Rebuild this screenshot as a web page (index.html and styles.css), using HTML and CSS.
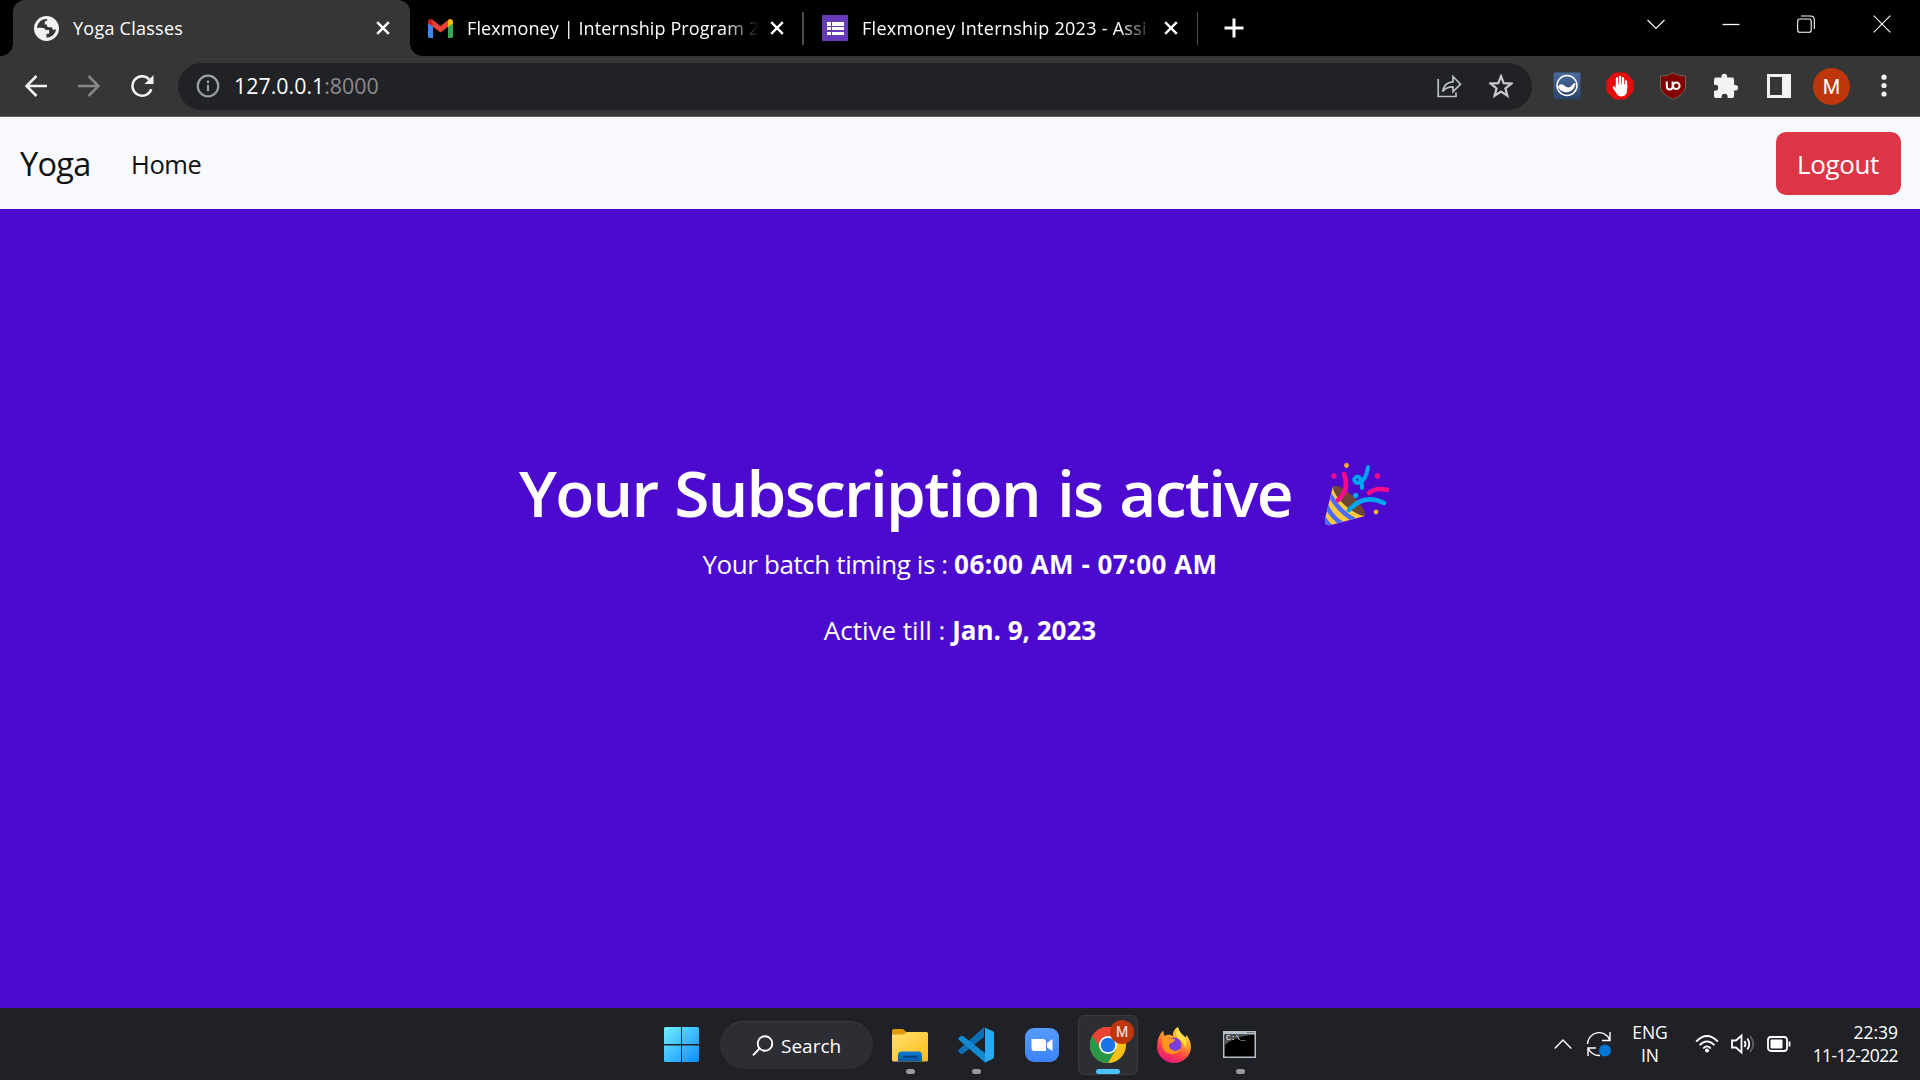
FILE: index.html
```html
<!DOCTYPE html>
<html lang="en">
<head>
<meta charset="utf-8">
<title>Yoga Classes</title>
<link rel="stylesheet" href="styles.css">
</head>
<body>
<header class="tabstrip">
  <div class="tab tab-active">
    <svg class="favicon" viewBox="0 0 24 24"><circle cx="12" cy="12" r="12" fill="#f1f3f4"/><path d="M12.600 2.800A9.400 9.400 0 0 0 2.700 11.300H7.500Q10.500 11.300 11.300 13.500H14.500V17H12V20.800A9.300 9.300 0 0 0 21.300 12.500Q20.500 13.500 18.800 13.200Q17 12.800 17.200 10.800H14Q12.500 10.800 12.500 9V8.200H10.300V6Q10.300 4.500 12.600 4.200Z" fill="#363636"/></svg>
    <span class="tab-title t1">Yoga Classes</span>
    <svg class="close" viewBox="0 0 14 14"><path d="M1.200 1.200L12.800 12.800M12.800 1.200L1.200 12.800"/></svg>
  </div>
  <div class="tab">
    <svg class="favicon gmail" viewBox="0 0 25 19"><path d="M0 3h5v16H1.700Q0 19 0 17.300Z" fill="#4285f4"/><path d="M20 3h5v14.300Q25 19 23.300 19H20Z" fill="#34a853"/><path d="M0 3Q0 0 2.500 0Q4 0 5 1l.8 6.500L0 4.500Z" fill="#c5221f"/><path d="M4.500 .8L12.500 7L20.500 .8V7.500L12.500 13.500L4.500 7.500Z" fill="#ea4335"/><path d="M20 1.200Q22-.5 23.800.4Q25 1.200 25 3V4.500L20 8Z" fill="#fbbc04"/></svg>
    <span class="tab-title t2">Flexmoney | Internship Program 2</span>
    <svg class="close" viewBox="0 0 14 14"><path d="M1.200 1.200L12.800 12.800M12.800 1.200L1.200 12.800"/></svg>
  </div>
  <div class="tab">
    <svg class="favicon forms" viewBox="0 0 26 26"><rect width="26" height="26" rx="1" fill="#673ab7"/><path d="M5 7h4v4H5zM5 12h4v3H5zM5 17h4v3H5zM10 7h12v4H10zM10 12h12v3H10zM10 17h12v3H10z" fill="#fff"/></svg>
    <span class="tab-title t3">Flexmoney Internship 2023 - Assi</span>
    <svg class="close" viewBox="0 0 14 14"><path d="M1.200 1.200L12.800 12.800M12.800 1.200L1.200 12.800"/></svg>
  </div>
  <svg class="newtab" viewBox="0 0 20 20"><path d="M10 .5v19M.5 10h19" stroke="#fff" stroke-width="3"/></svg>
  <div class="window-controls">
    <svg viewBox="0 0 18 18"><path d="M.5 5L9 13.500L17.500 5"/></svg>
    <svg viewBox="0 0 18 18"><path d="M.5 9.500h17" stroke-width="1.300"/></svg>
    <svg viewBox="0 0 18 18"><rect x=".7" y="4" width="13.500" height="13.300" rx="2"/><path d="M4 1h9.500q3.800 0 3.800 3.800V14"/></svg>
    <svg viewBox="0 0 18 18"><path d="M.7.700l16.600 16.600M17.300.700L.7 17.300"/></svg>
  </div>
</header>
<div class="toolbar">
  <svg class="tool back" viewBox="0 0 24 24"><path d="M23 12H3M12.500 2L2.500 12l10 10"/></svg>
  <svg class="tool forward" viewBox="0 0 24 24"><path d="M1 12h20M11.500 2l10 10-10 10"/></svg>
  <svg class="tool reload" viewBox="0 0 24 24"><path d="M19.200 5.300A9.700 9.700 0 1 0 21.300 15.300"/><path d="M23.500 1v9h-9z" fill="#f1f3f4" stroke="none"/></svg>
  <div class="omnibox">
    <svg class="info" viewBox="0 0 24 24"><circle cx="12" cy="12" r="10.300"/><path d="M12 10.800v6.400M12 6.500v2.400"/></svg>
    <span class="url">127.0.0.1<span class="port">:8000</span></span>
    <svg class="share" viewBox="0 0 25 24"><path d="M1.200 5v17.500H19v-4M5.500 17.500C7 11 11 7.800 16 7.800V2.500l7.500 7.700-7.500 7.600v-5C11.500 12.800 8.200 14 5.500 17.500Z"/></svg>
    <svg class="star" viewBox="0 0 24 24"><path d="M12 2.200l2.700 7 7.600.400-5.900 4.700 2 7.400L12 17.500l-6.400 4.200 2-7.400L1.700 9.600l7.600-.4z"/></svg>
  </div>
  <svg class="ext" viewBox="0 0 28 28"><defs><linearGradient id="eb" x2="0" y2="1"><stop stop-color="#4a6ca0"/><stop offset="1" stop-color="#2a4268"/></linearGradient></defs><rect x=".5" y=".5" width="27" height="27" rx="1.500" fill="url(#eb)"/><circle cx="14" cy="13.500" r="10" fill="none" stroke="#fff" stroke-width="1.500"/><path d="M5 15C6 11.500 9 11.500 12 14C15 16.500 17.500 15.500 19 13Q20.500 11 22.500 11A9.200 9.200 0 0 1 5 15Z" fill="#fff"/></svg>
  <svg class="ext" viewBox="0 0 28 28"><path d="M8.500.5h11l8 8v11l-8 8h-11l-8-8v-11z" fill="#e60c0c"/><path d="M11 15V6.500M14 14V4.800M17 14.500V6.200M20 16.500V9.500" stroke="#fff" stroke-width="2.300" stroke-linecap="round"/><path d="M9.700 12.500h11.500v5.500q-.5 6.500-5.800 6.500q-3.500 0-5.500-4L6.700 16q-.3-2 1.300-1.800l1.700 1.800z" fill="#fff"/></svg>
  <svg class="ext" viewBox="0 0 28 28"><path d="M14 .7Q19 4 26.500 4v11q-1 7.500-12.500 12.300Q2.500 22.500 1.500 15V4Q9 4 14 .7Z" fill="#800000" stroke="#776" stroke-width=".8"/><path d="M7.800 9.500v5q0 3 3.200 3q2.600 0 2.600-3v-5" fill="none" stroke="#fff" stroke-width="2"/><circle cx="17.300" cy="13.700" r="3.300" fill="none" stroke="#fff" stroke-width="2"/></svg>
  <svg class="ext" viewBox="0 0 28 28"><path d="M4 5.500H9.500V4.500a2.800 2.800 0 0 1 5.600 0v1h5q2 0 2 2V13h1.200a2.800 2.800 0 0 1 0 5.600h-1.200V24q0 2-2 2H15.600v-1.200a3 3 0 0 0-6 0V26H4q-2 0-2-2v-5.200h1.200a3 3 0 0 0 0-6H2V7.500q0-2 2-2z" fill="#f1f3f4"/></svg>
  <svg class="ext panel" viewBox="0 0 28 28"><path d="M2 2h24v24H2zM5 5v18h12V5z" fill="#f1f3f4" fill-rule="evenodd"/></svg>
  <span class="avatar">M</span>
  <svg class="ext menu" viewBox="0 0 28 28"><circle cx="14" cy="5.200" r="2.600"/><circle cx="14" cy="13.500" r="2.600"/><circle cx="14" cy="22" r="2.600"/></svg>
</div>
<nav class="navbar">
  <a class="brand">Yoga</a>
  <a class="nav-link">Home</a>
  <button class="logout">Logout</button>
</nav>
<main class="hero">
  <h1 class="hero-title"><span>Your Subscription is active</span>
    <svg class="party" viewBox="0 0 66 66"><path d="M10 25C15 18 43 43 42 53C37 61 5 34 10 25Z" fill="#6d4534"/><clipPath id="cone"><path d="M10 24C9 35 32 54 42 54L8 63Q1 64 2 57Z"/></clipPath><g clip-path="url(#cone)"><path d="M0 20h45v45H0z" fill="#ffc83d"/><path d="M7 33Q16 50 33 59M3 43Q9 56 21 63M-1 52Q3 62 12 67" fill="none" stroke="#4b6bff" stroke-width="4.500"/></g><g fill="none" stroke-linecap="round" stroke-width="4.600"><path d="M21 12Q27 28 15 38" stroke="#f70a8d"/><path d="M46 31Q53 25 64 28" stroke="#f70a8d"/><path d="M26 48Q41 31 61 41" stroke="#00a6ed"/><path d="M45 5Q43 20 34 21Q29 18 33 15Q39 13 39 26" stroke="#00a6ed" stroke-width="4"/></g><g fill="#f70a8d"><circle cx="11" cy="14" r="2.700"/><circle cx="54.500" cy="14" r="2.700"/></g><g fill="#ffb02e"><circle cx="23.500" cy="3.500" r="2.400"/><circle cx="53" cy="50" r="2.400"/></g><circle cx="32.700" cy="33.500" r="2.700" fill="#00a6ed"/></svg>
  </h1>
  <p class="batch">Your batch timing is : <b>06:00 AM - 07:00 AM</b></p>
  <p class="till">Active till : <b>Jan. 9, 2023</b></p>
</main>
<footer class="taskbar">
  <div class="task start"><svg viewBox="0 0 36 36"><defs><linearGradient id="win" x2="1" y2="1"><stop stop-color="#70eeff"/><stop offset="1" stop-color="#0b8dff"/></linearGradient></defs><path d="M0 1.500Q0 0 1.500 0H17v17H0zM18 0h15.500Q35 0 35 1.500V17H18zM0 18.500h17V35H1.500Q0 35 0 33.500zM18 18.500h17v15Q35 35 33.500 35H18z" fill="url(#win)"/></svg></div>
  <div class="search"><svg viewBox="0 0 22 22"><circle cx="13" cy="8.500" r="7.300"/><path d="M7.500 13.500L1 20.300"/></svg><span>Search</span></div>
  <div class="task running"><svg viewBox="0 0 36 36"><defs><linearGradient id="fo" x2="1" y2="1"><stop stop-color="#ffdf70"/><stop offset="1" stop-color="#ffbd18"/></linearGradient><linearGradient id="fb" x2="0" y2="1"><stop stop-color="#0c7bd0"/><stop offset="1" stop-color="#0657a8"/></linearGradient></defs><path d="M0 4q0-2 2-2h9l4 3.500V10H0z" fill="#e09a08"/><path d="M0 8.500q0-1 1-1h10.500l3.500-2.500h19.500q1.500 0 1.500 1.500V33q0 1.500-1.500 1.500H1.500Q0 34.500 0 33z" fill="url(#fo)"/><path d="M6 34.500V28q0-3.500 3.500-3.500h17Q30 24.500 30 28v6.500z" fill="url(#fb)"/><path d="M11 29.700h14" stroke="#06407e" stroke-width="1.800"/></svg></div>
  <div class="task running"><svg viewBox="0 0 36 36"><path d="M26 .2V10L5 26.800q-1 .7-2 0L.6 24.700q-1-1 0-2z" fill="#0c6fb4"/><path d="M0 11.500l3-2.500q1-.5 2 .1L27 26v9.500L.8 12.700Q0 12 0 11.500z" fill="#1489d0"/><path d="M26 .2L34.500 4q1.500.7 1.500 2.300v23.400q0 1.600-1.500 2.300L26 35.900q1-.5 1-2V2.200Q27 .8 26 .2z" fill="#29a9f2"/></svg></div>
  <div class="task"><svg viewBox="0 0 36 36"><defs><linearGradient id="zm" x2="0" y2="1"><stop stop-color="#559cff"/><stop offset="1" stop-color="#3b83f9"/></linearGradient></defs><rect x="1" y="1" width="34" height="34" rx="9" fill="url(#zm)"/><path d="M7.500 12h11.300q3.200 0 3.200 3.200V24H10.500q-3 0-3-3zM23 16l5.500-4v12L23 20.500z" fill="#fff"/></svg></div>
  <div class="task running current"><svg viewBox="0 0 36 36"><circle cx="18" cy="18" r="18" fill="#fbc116"/><path d="M2.400 9A18 18 0 0 0 18 36l8-13.500L18 18l-7.800 4.500z" fill="#279847"/><path d="M18 18L10.200 22.500L2.400 9A18 18 0 0 1 33.600 9H18z" fill="#ea4335"/><path d="M2.400 9L10.200 22.500L18 27V18z" fill="#279847"/><path d="M2.400 9A18 18 0 0 1 33.600 9H18L10.200 13.500V20z" fill="#ea4335"/><circle cx="18" cy="18" r="9" fill="#fff"/><circle cx="18" cy="18" r="7.300" fill="#1a73e8"/></svg><span class="badge">M</span></div>
  <div class="task"><svg viewBox="0 0 36 36"><defs><linearGradient id="ff" x1=".8" y1="0" x2=".3" y2="1"><stop stop-color="#fff44f"/><stop offset=".4" stop-color="#ff9a28"/><stop offset=".7" stop-color="#ff3d45"/><stop offset="1" stop-color="#e0168a"/></linearGradient></defs><path d="M7 3.500L8.500 9Q12 6.500 17 9Q16 4 21.500 0Q23 5 27 8.500L29 11L30.500 8Q35 14 35 20A17 16 0 0 1 1 20Q1 10 7 3.500Z" fill="url(#ff)"/><circle cx="18" cy="18" r="7.500" fill="#7940d6"/><path d="M6 10q5-1 8 1.500l5 .5q0 3-4.500 4-3 3 0 6 5 4 10-.5-2 6-9 5.500Q6 26 6 16z" fill="#ff951d"/><path d="M22 0q1 5 6 9 4 4 1 12-1-7-6-9-5-4-1-12z" fill="#ffe14c"/></svg></div>
  <div class="task running"><svg viewBox="0 0 36 36"><defs><linearGradient id="te" x2=".7" y2="1"><stop stop-color="#333"/><stop offset=".4" stop-color="#555"/></linearGradient></defs><path d="M1 4h33v27H1z" fill="#b5bfca"/><path d="M2.500 7.500h30v22h-30z" fill="#000"/><path d="M2.500 7.500h30Q9 10 2.500 19z" fill="url(#te)"/><path d="M25 5.500h7" stroke="#536477" stroke-width="1" stroke-dasharray="2 .8"/></svg><span class="prompt">C:\_</span></div>
  <div class="tray">
    <svg class="up" viewBox="0 0 18 12"><path d="M.7 10.500L9 2l8.300 8.500"/></svg>
    <svg class="sync" viewBox="0 0 26 26"><path d="M1.500 13A11.500 11.500 0 0 1 23.500 8.500M24 1v8.500h-8M2 25v-8h8M2 17q4 8 12 7.500"/><circle cx="19" cy="19.500" r="6" fill="#0078d4" stroke="none"/></svg>
    <div class="lang">ENG<br>IN</div>
    <svg class="status wifi" viewBox="0 0 24 24"><path d="M1.200 9.500Q12-1.500 22.800 9.500M4.600 13.200Q12 5.500 19.400 13.200M8.200 16.500Q12 12.200 15.800 16.500"/><circle cx="12" cy="18.600" r="2" fill="#fff" stroke="none"/></svg>
    <svg class="status" viewBox="0 0 24 24"><path d="M1 8.500h4l5.500-5v17L5 15.500H1zM13.500 9q2 3 0 6M16.300 6.500q4 5.500 0 11"/><path d="M19 4q6.500 8 0 16" stroke="#606064"/></svg>
    <svg class="status" viewBox="0 0 24 24"><rect x="1" y="5" width="19" height="14" rx="3"/><rect x="3.500" y="7.500" width="12" height="9" rx="1" fill="#fff" stroke="none"/><path d="M22.500 9.500v5"/></svg>
    <div class="clock">22:39<br><span class="date">11-12-2022</span></div>
  </div>
</footer>
</body>
</html>
```

FILE: styles.css
```css
* { box-sizing: border-box; }
body {
  margin: 0;
  width: 1920px;
  height: 1080px;
  overflow: hidden;
  display: flex;
  flex-direction: column;
  font-family: "Open Sans", "Noto Sans", sans-serif;
  color: #fff;
}
svg { display: block; flex: none; }

/* Tab strip */
.tabstrip {
  height: 56px;
  background: #000;
  display: flex;
  align-items: center;
  padding-left: 13px;
}
.tab {
  position: relative;
  width: 394.500px;
  height: 56px;
  display: flex;
  align-items: center;
  padding: 0 21px 0 18px;
}
.tab:nth-child(3) { padding-left: 17.500px; }
.tab-active {
  width: 397px;
  background: #363636;
  border-radius: 12px 12px 0 0;
  padding: 0 20px 0 21px;
}
.tab-active::before,
.tab-active::after {
  content: "";
  position: absolute;
  bottom: 0;
  width: 12px;
  height: 12px;
  background: radial-gradient(circle at 0 0, transparent 11.500px, #363636 12px);
}
.tab-active::before { left: -12px; }
.tab-active::after {
  right: -12px;
  background: radial-gradient(circle at 100% 0, transparent 11.500px, #363636 12px);
}
.tab:not(.tab-active)::after {
  content: "";
  position: absolute;
  right: 1px;
  top: 12px;
  width: 1.500px;
  height: 33px;
  background: #4b4b4b;
}
.favicon { width: 25px; height: 25px; }
.gmail { height: 19px; }
.forms { width: 26px; height: 26px; }
.tab-title {
  margin-left: 14px;
  width: 296px;
  font-size: 18px;
  line-height: 24px;
  white-space: nowrap;
  flex: none;
}
.t1 { letter-spacing: .25px; }
.t2, .t3 {
  -webkit-mask-image: linear-gradient(90deg, #000 258px, transparent 292px);
  mask-image: linear-gradient(90deg, #000 258px, transparent 292px);
}
.t2 { letter-spacing: .1px; }
.t3 { letter-spacing: .28px; }
.close {
  width: 14px;
  height: 14px;
  margin-left: auto;
  stroke: #fff;
  stroke-width: 2.500;
}
.newtab { width: 20px; height: 20px; margin-left: 25px; }
.window-controls {
  margin-left: auto;
  display: flex;
  gap: 57.300px;
  padding: 0 29.300px 9px 0;
}
.window-controls svg {
  width: 18px;
  height: 18px;
  fill: none;
  stroke: #fff;
  stroke-width: 1.100;
}

/* Address bar row */
.toolbar {
  height: 61px;
  background: #363636;
  border-bottom: 1px solid #626262;
  display: flex;
  align-items: center;
  padding-left: 24px;
}
.tool {
  width: 24px;
  height: 24px;
  fill: none;
  stroke: #f1f3f4;
  stroke-width: 2.500;
  margin-right: 29px;
}
.forward { stroke: #868686; }
.reload { margin-right: 24px; }
.omnibox {
  width: 1354px;
  height: 47px;
  border-radius: 24px;
  background: #202226;
  margin-right: 21px;
  display: flex;
  align-items: center;
  padding: 0 19px 0 18px;
}
.info { width: 24px; height: 24px; fill: none; stroke: #9aa0a6; stroke-width: 2.200; }
.url { margin-left: 14px; font-size: 21.400px; line-height: 30px; }
.port { color: #8b8c8f; }
.share {
  width: 25px;
  height: 24px;
  margin-left: auto;
  fill: none;
  stroke: #bdc0c3;
  stroke-width: 1.700;
}
.star { width: 24px; height: 24px; margin-left: 27px; fill: none; stroke: #c8cacc; stroke-width: 2.200; }
.ext { width: 28px; height: 28px; margin-right: 25px; }
.avatar {
  width: 37px;
  height: 37px;
  margin-left: -5px;
  border-radius: 50%;
  background: #bf360c;
  font: 20px/38px Roboto, sans-serif;
  text-align: center;
}
.menu { margin: 0 0 0 20px; fill: #f1f3f4; }

/* Page navigation */
.navbar {
  height: 92px;
  background: #f8f9fc;
  color: #111;
  display: flex;
  align-items: center;
  padding: 1px 19px 0 20px;
}
.brand { font-size: 32.500px; width: 111px; letter-spacing: -.7px; }
.nav-link { font-size: 25.500px; letter-spacing: -.4px; }
.logout {
  margin: 0 0 1px auto;
  width: 125px;
  height: 63px;
  border: 0;
  border-radius: 10px;
  background: #dc3545;
  color: #fff;
  font: 26px "Open Sans", "Noto Sans", sans-serif;
  letter-spacing: -.4px;
  padding: 1px 1px 0 0;
}

/* Subscription message */
.hero {
  height: 799px;
  background: #4c0acf;
  display: flex;
  flex-direction: column;
  align-items: center;
  padding-top: 247px;
}
.hero-title {
  margin: 0;
  display: flex;
  align-items: center;
  gap: 31px;
  font-size: 64px;
  font-weight: 600;
  letter-spacing: -1.750px;
  word-spacing: 2px;
  line-height: 73px;
  padding: 0 12px 5px 0;
  white-space: nowrap;
}
.party { width: 66px; height: 66px; margin-top: 5px; }
.hero p {
  margin: 10px 0 0;
  font-size: 26px;
  line-height: 40px;
  white-space: nowrap;
}
.hero p.batch { letter-spacing: -.4px; }
.batch b { letter-spacing: .5px; }
.hero p.till { margin-top: 26px; }

/* Taskbar */
.taskbar {
  height: 72px;
  background: #202126;
  display: flex;
  align-items: center;
  gap: 6px;
  padding: 2px 0 0 652px;
}
.task {
  position: relative;
  width: 60px;
  height: 60px;
  display: grid;
  place-items: center;
  flex: none;
}
.task svg { width: 36px; height: 36px; }
.search {
  width: 153px;
  height: 48px;
  margin: 0 1px 0 2px;
  border-radius: 24px;
  border-top: 1px solid #3c3d41;
  background: #2d2e33;
  display: flex;
  align-items: center;
  padding-left: 32px;
  font-size: 19px;
}
.search svg { width: 22px; height: 22px; fill: none; stroke: #fff; stroke-width: 1.900; margin-right: 7px; }
.running::after {
  content: "";
  position: absolute;
  bottom: 1px;
  left: 26px;
  width: 9px;
  height: 5px;
  border-radius: 3px;
  background: #9b9b9d;
}
.current { background: #2d2e33; border: 1px solid #3a3b3f; border-radius: 6px; }
.current::after { left: 17px; width: 24px; bottom: 0; background: #4cc2ff; }
.badge {
  position: absolute;
  left: 31px;
  top: 4px;
  width: 24px;
  height: 24px;
  border-radius: 50%;
  background: #bf360c;
  color: #e8d5ce;
  font: 500 14px/24px Roboto, sans-serif;
  text-align: center;
}
.prompt {
  position: absolute;
  left: 16px;
  top: 18px;
  font: 8px/10px "Liberation Mono", monospace;
}
.tray {
  margin-left: auto;
  padding: 0 22px 2px 0;
  display: flex;
  align-items: center;
  font-size: 17.500px;
  line-height: 23px;
}
.tray svg { fill: none; stroke: #fff; stroke-width: 1.400; }
.up { width: 18px; height: 12px; }
.sync { width: 26px; height: 26px; margin-left: 14px; }
.lang { width: 50px; margin: 0 20px 0 13px; text-align: center; }
.tray .status { width: 24px; height: 24px; margin-right: 12px; stroke-width: 1.800; }
.clock { width: 95px; text-align: right; white-space: nowrap; }
.date { letter-spacing: -.6px; }
```
